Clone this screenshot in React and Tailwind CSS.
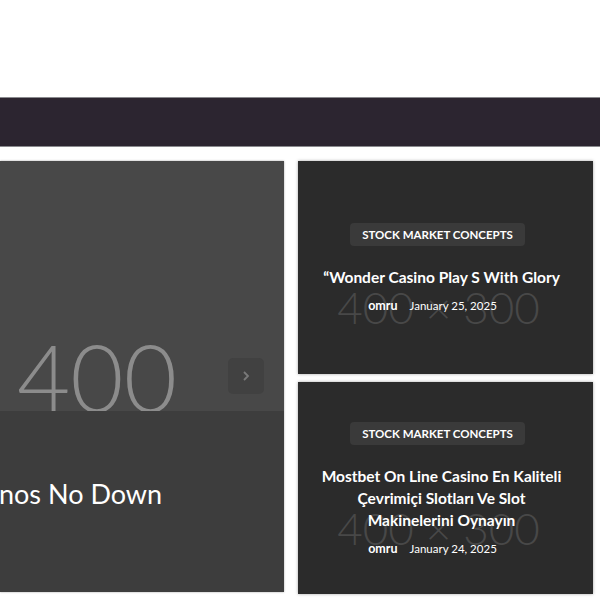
import React from "react";

function SideCard({ title, date, lines }) {
  return (
    <div className="relative flex-1 overflow-hidden bg-[#2b2b2b] shadow-[0_0_3px_rgba(0,0,0,0.35)]">
      <div className="absolute left-0 right-0 top-[124px] flex justify-center pr-[14px] text-[44px] font-light leading-none text-[#484848] whitespace-nowrap">
        400 × 300
      </div>
      <div className="relative flex h-full flex-col items-center justify-center pt-[4px] pr-[8px] text-center">
        <div className="mr-[8px] rounded-[4px] bg-[#3a3a3a] px-[12px] py-[5px] text-[11.5px] font-bold leading-[13px] text-white">
          STOCK MARKET CONCEPTS
        </div>
        <div className="mt-[20px] text-[15.5px] font-bold leading-[22px] text-white">
          {lines.map((l, i) => (
            <div key={i}>{l}</div>
          ))}
        </div>
        <div className="mt-[9px] mr-[18px] flex items-baseline gap-[12px] leading-[18px] text-white">
          <span className="text-[12.5px] font-bold">omru</span>
          <span className="text-[11.5px]">{date}</span>
        </div>
      </div>
    </div>
  );
}

export default function App() {
  return (
    <div className="h-[600px] w-[600px] overflow-hidden bg-white font-['Lato','Noto_Sans',sans-serif]">
      <div className="h-[97px]" />
      <div className="h-[50px] border-y border-[#8a8a8e] bg-[#2c2530]" />
      <div className="mt-[14px] flex gap-[14px]">
        <div className="flex h-[431px] w-[284px] flex-col overflow-hidden bg-[#3d3d3d] shadow-[0_0_2px_rgba(0,0,0,0.35)]">
          <div className="relative h-[250px] bg-[#484848]">
            <div className="absolute bottom-[-12px] left-[17px] text-[92px] font-light leading-none text-[#8c8c8c]">
              400
            </div>
            <div className="absolute left-[228px] top-[197px] flex h-[36px] w-[36px] items-center justify-center rounded-[5px] bg-[#414141]">
              <svg width="10" height="12" viewBox="0 0 10 12" fill="none">
                <path d="M3 2l4 4-4 4" stroke="#7a7a7a" strokeWidth="1.8" />
              </svg>
            </div>
          </div>
          <div className="relative flex-1 bg-[#3d3d3d]">
            <div className="absolute left-[-1px] top-[66px] whitespace-nowrap text-[27px] leading-[34px] text-white">
              nos No Down
            </div>
          </div>
        </div>
        <div className="flex h-[433px] w-[295px] flex-col gap-[8px]">
          <SideCard
            date="January 25, 2025"
            lines={["“Wonder Casino Play S With Glory"]}
          />
          <SideCard
            date="January 24, 2025"
            lines={[
              "Mostbet On Line Casino En Kaliteli",
              "Çevrimiçi Slotları Ve Slot",
              "Makinelerini Oynayın",
            ]}
          />
        </div>
      </div>
    </div>
  );
}
